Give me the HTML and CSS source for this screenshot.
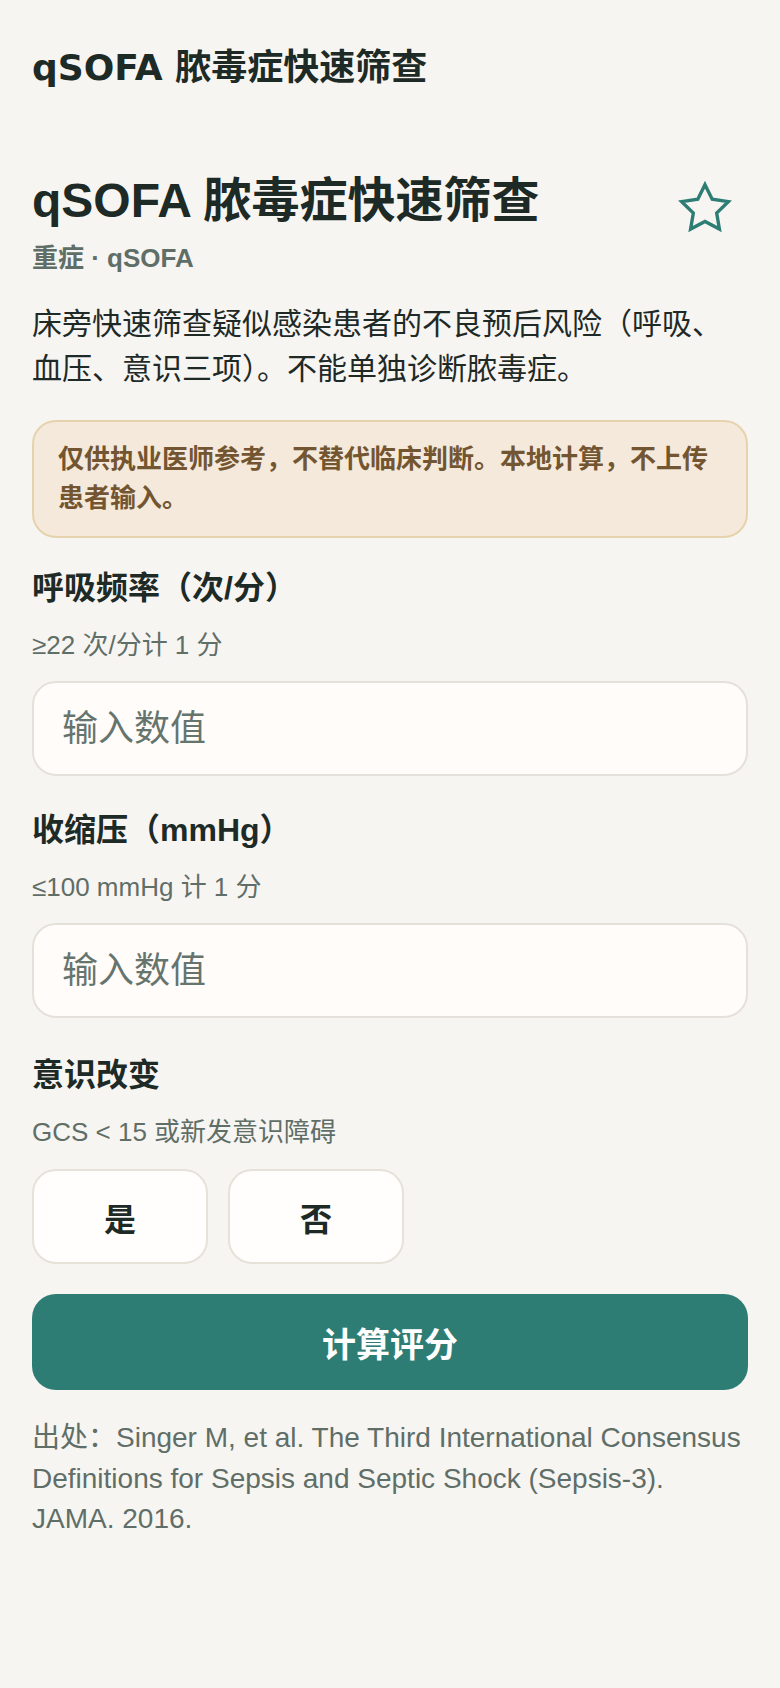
FILE: index.html
```html
<!DOCTYPE html>
<html lang="zh-CN">
<head>
<meta charset="utf-8">
<meta name="viewport" content="width=device-width, initial-scale=1">
<title>qSOFA 脓毒症快速筛查</title>
<link rel="stylesheet" href="styles.css">
</head>
<body>
<header class="appbar">
  <h1 class="appbar-title">qSOFA 脓毒症快速筛查</h1>
</header>
<main class="content">
  <div class="title-row">
    <div class="title-block">
      <h2 class="title">qSOFA 脓毒症快速筛查</h2>
      <div class="subtitle">重症 · qSOFA</div>
    </div>
    <button class="fav" type="button" aria-label="收藏">
      <svg viewBox="0 0 24 24" width="56" height="56" fill="none" stroke="#2e7d74" stroke-width="1.45" stroke-linejoin="miter">
        <path d="M12 2l3.09 6.26L22 9.27l-5 4.87 1.18 6.88L12 17.77l-6.18 3.25L7 14.14 2 9.27l6.91-1.01L12 2z"/>
      </svg>
    </button>
  </div>
  <p class="desc">床旁快速筛查疑似感染患者的不良预后风险（呼吸、血压、意识三项）。不能单独诊断脓毒症。</p>
  <div class="notice">仅供执业医师参考，不替代临床判断。本地计算，不上传患者输入。</div>

  <div class="field first">
    <div class="label">呼吸频率（次/分）</div>
    <div class="hint">≥22 次/分计 1 分</div>
    <input class="input" type="text" placeholder="输入数值">
  </div>

  <div class="field">
    <div class="label">收缩压（mmHg）</div>
    <div class="hint">≤100 mmHg 计 1 分</div>
    <input class="input" type="text" placeholder="输入数值">
  </div>

  <div class="field last">
    <div class="label">意识改变</div>
    <div class="hint">GCS &lt; 15 或新发意识障碍</div>
    <div class="choices">
      <button class="choice" type="button">是</button>
      <button class="choice" type="button">否</button>
    </div>
  </div>

  <button class="calc" type="button">计算评分</button>

  <p class="source">出处：Singer M, et al. The Third International Consensus Definitions for Sepsis and Septic Shock (Sepsis-3). JAMA. 2016.</p>
</main>
</body>
</html>
```
FILE: styles.css
```css
* { box-sizing: border-box; }

html, body {
  margin: 0;
  padding: 0;
  background: #f7f5f2;
}

body {
  font-family: "Liberation Sans", "Noto Sans CJK SC", sans-serif;
  color: #1d2a26;
}

.appbar {
  padding: 45px 32px 0;
}

.appbar-title {
  margin: 0;
  font-family: "DejaVu Sans", "Noto Sans CJK SC", sans-serif;
  font-weight: 700;
  font-size: 36px;
  line-height: 46px;
  color: #1d2a26;
}

.content {
  padding: 80px 32px 60px;
}

.title-row {
  display: flex;
  align-items: flex-start;
  justify-content: space-between;
}

.title-block {
  flex: 1;
  min-width: 0;
}

.title {
  margin: 0;
  font-size: 48px;
  line-height: 60px;
  font-weight: 700;
  color: #1d2a26;
}

.subtitle {
  margin-top: 9px;
  font-size: 26px;
  line-height: 36px;
  font-weight: 700;
  color: #5f6e67;
}

.fav {
  flex: none;
  margin: 9px 15px 0 0;
  padding: 0;
  width: 56px;
  height: 56px;
  border: none;
  background: transparent;
  display: flex;
}

.desc {
  margin: 25px 0 0;
  font-size: 30px;
  line-height: 45px;
  color: #1f2a27;
}

.notice {
  margin-top: 29px;
  padding: 18px 24px;
  border: 2px solid #e6d3ad;
  border-radius: 24px;
  background: #f4e9da;
  color: #735631;
  font-size: 26px;
  line-height: 39px;
  font-weight: 700;
}

.field {
  margin-top: 32px;
}

.field.first {
  margin-top: 28px;
}

.field.last {
  margin-top: 35px;
}

.label {
  font-size: 32px;
  line-height: 45px;
  font-weight: 700;
  color: #1d2a26;
}

.hint {
  margin-top: 15px;
  font-size: 26px;
  line-height: 39px;
  color: #5f6e67;
}

.input {
  display: block;
  width: 100%;
  height: 95px;
  margin-top: 16px;
  padding: 0 28px;
  border: 2px solid #e5e1da;
  border-radius: 24px;
  background: #fffcf9;
  font-family: "Liberation Sans", "Noto Sans CJK SC", sans-serif;
  font-size: 36px;
  color: #1d2a26;
  outline: none;
}

.input::placeholder {
  color: #66746e;
  opacity: 1;
}

.choices {
  display: flex;
  gap: 20px;
  margin-top: 17px;
}

.choice {
  width: 176px;
  height: 95px;
  border: 2px solid #e6e1d9;
  border-radius: 24px;
  background: #fffefc;
  font-family: "Liberation Sans", "Noto Sans CJK SC", sans-serif;
  font-size: 32px;
  font-weight: 700;
  color: #1d2a26;
  padding: 0;
}

.calc {
  display: block;
  width: 100%;
  height: 96px;
  margin-top: 30px;
  border: none;
  border-radius: 24px;
  background: #2e7d74;
  color: #ffffff;
  font-family: "Liberation Sans", "Noto Sans CJK SC", sans-serif;
  font-size: 34px;
  font-weight: 700;
}

.source {
  margin: 28px 0 0;
  font-size: 28px;
  line-height: 40.5px;
  color: #5f6e67;
}
```
